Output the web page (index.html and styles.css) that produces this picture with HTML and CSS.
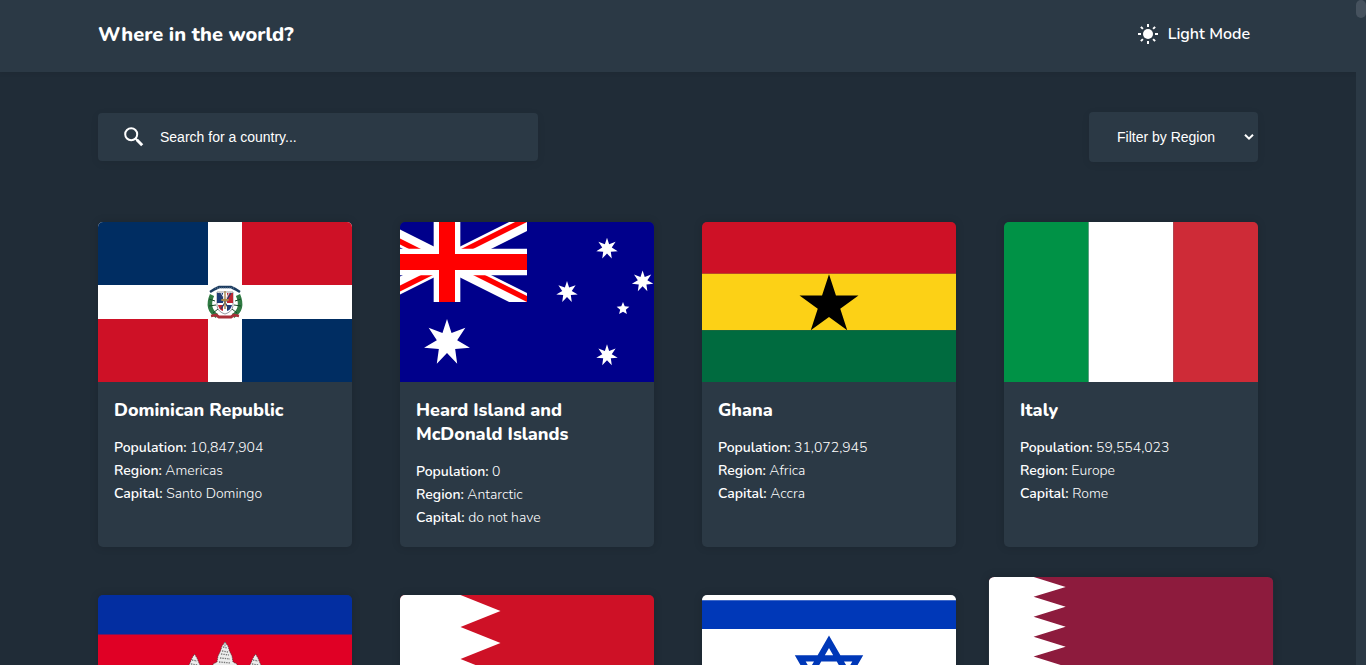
FILE: index.html
```
<!DOCTYPE html>
<html lang="en">
<head>
<meta charset="utf-8">
<title>Where in the world?</title>
<link rel="stylesheet" href="styles.css">
</head>
<body>
<div class="page">
  <header class="header">
    <h1 class="brand">Where in the world?</h1>
    <button class="theme" type="button">
      <svg class="theme-icon" width="20" height="20" viewBox="0 0 20 20" fill="#fff">
        <circle cx="10" cy="10" r="5"/>
        <path d="M9 0h2v3H9zM9 17h2v3H9zM0 9h3v2H0zM17 9h3v2h-3z"/>
        <path d="M2.900 2.900l2 2M17.100 2.900l-2 2M2.900 17.100l2-2M17.100 17.100l-2-2" stroke="#fff" stroke-width="2"/>
      </svg>
      <span class="theme-label">Light Mode</span>
    </button>
  </header>
  <main class="main">
    <div class="controls">
      <label class="search">
        <svg width="20" height="20" viewBox="0 0 20 20" fill="none" stroke="#fff">
          <circle cx="7.2" cy="7.2" r="6" stroke-width="2"/>
          <path d="M11.4 11.4l2 2" stroke-width="2"/>
          <path d="M12.8 12.8l5.4 5.4" stroke-width="3"/>
        </svg>
        <span>Search for a country...</span>
      </label>
      <div class="filter">
        <span>Filter by Region</span>
        <svg width="10" height="8" viewBox="0 0 10 8" fill="none" stroke="#fff" stroke-width="2"><path d="M1 1.7l4 4 4-4"/></svg>
      </div>
    </div>
    <section class="grid">
      <article class="card">
        <svg class="flag" viewBox="0 0 254 160">
          <path fill="#fff" d="M0 0h254v160H0z"/>
          <path fill="#002d62" d="M0 0h110v63H0zM144 97h110v63H144z"/>
          <path fill="#ce1126" d="M144 0h110v63H144zM0 97h110v63H0z"/>
          <g fill="none">
            <path d="M114 73q-6 14 5 21M140 73q6 14-5 21" stroke="#2f7a42" stroke-width="4.500"/>
            <path d="M111 77l6 2M111 84l7-1M115 91l5-4M143 77l-6 2M143 84l-7-1M139 91l-5-4" stroke="#174a26" stroke-width="1"/>
            <path d="M112 70l5-3 4-2h12l4 2 5 3" stroke="#1c3c60" stroke-width="2.600"/>
            <path d="M117 66h20" stroke="#8297ae" stroke-width=".8" stroke-dasharray="1 1"/>
            <path d="M113 94l5-1 3 2h12l3-2 5 1" stroke="#a92f38" stroke-width="2.800"/>
          </g>
          <path fill="#fff" stroke="#6d6d78" stroke-width=".7" d="M119 70h16v14q-1 6-8 8-7-2-8-8z"/>
          <path fill="#1c3c78" d="M119 71h6v10h-6zM129 83h5q-1 5-5 6z"/>
          <path fill="#c02632" d="M129 71h6v10h-6zM120 83h5v6q-4-1-5-6z"/>
          <path d="M121 71l10 16M133 71l-10 16" stroke="#2f3f68" stroke-width="1.400"/>
          <path d="M123 71l5 8M131 71l-4 8" stroke="#d8dbe4" stroke-width="1"/>
          <path fill="#a8854a" d="M126.300 69h1.400v8h3v2h-3v8h-1.400v-8h-3v-2h3z"/>
        </svg>
        <div class="info">
          <h2 class="name">Dominican Republic</h2>
          <p><b>Population:</b> 10,847,904</p>
          <p><b>Region:</b> Americas</p>
          <p><b>Capital:</b> Santo Domingo</p>
        </div>
      </article>
      <article class="card">
        <svg class="flag" viewBox="33 0 254 160">
          <defs>
            <clipPath id="canton"><path d="M0 0h60v30H0z"/></clipPath>
            <clipPath id="quarters"><path d="M30 15h30v15zv15H0zH0V0zV0h30z"/></clipPath>
            <polygon id="star7" points="0,-1 0.193,-0.4 0.782,-0.623 0.433,-0.099 0.975,0.223 0.347,0.277 0.434,0.901 0,0.444 -0.434,0.901 -0.347,0.277 -0.975,0.223 -0.433,-0.099 -0.782,-0.623 -0.193,-0.4"/>
          </defs>
          <path fill="#00008b" d="M0 0h320v160H0z"/>
          <g clip-path="url(#canton)" transform="scale(2.66667)">
            <path d="M0 0l60 30M60 0L0 30" stroke="#fff" stroke-width="6"/>
            <path d="M0 0l60 30M60 0L0 30" stroke="#f00" stroke-width="4" clip-path="url(#quarters)"/>
            <path d="M30 0v30M0 15h60" stroke="#fff" stroke-width="10"/>
            <path d="M30 0v30M0 15h60" stroke="#f00" stroke-width="6"/>
          </g>
          <g fill="#fff">
            <use href="#star7" transform="translate(80 120.500) scale(23.500)"/>
            <use href="#star7" transform="translate(240 133.3) scale(11)"/>
            <use href="#star7" transform="translate(200 70) scale(11)"/>
            <use href="#star7" transform="translate(240 26.7) scale(11)"/>
            <use href="#star7" transform="translate(275.6 59.400) scale(11)"/>
            <polygon transform="translate(256 86.7) scale(6.67)" points="0,-1 .26,-.36 .951,-.309 .42,.14 .588,.809 0,.445 -.588,.809 -.42,.14 -.951,-.309 -.26,-.36"/>
          </g>
        </svg>
        <div class="info">
          <h2 class="name">Heard Island and McDonald Islands</h2>
          <p><b>Population:</b> 0</p>
          <p><b>Region:</b> Antarctic</p>
          <p><b>Capital:</b> do not have</p>
        </div>
      </article>
      <article class="card">
        <svg class="flag" viewBox="0 0 254 160">
          <path fill="#ce1126" d="M0 0h254v51.8H0z"/>
          <path fill="#fcd116" d="M0 51.8h254v56.4H0z"/>
          <path fill="#006b3f" d="M0 108.2h254V160H0z"/>
          <polygon points="0,-1 .2245,-.309 .951,-.309 .363,.118 .588,.809 0,.382 -.588,.809 -.363,.118 -.951,-.309 -.2245,-.309" transform="translate(127 83.2) scale(31)"/>
        </svg>
        <div class="info">
          <h2 class="name">Ghana</h2>
          <p><b>Population:</b> 31,072,945</p>
          <p><b>Region:</b> Africa</p>
          <p><b>Capital:</b> Accra</p>
        </div>
      </article>
      <article class="card">
        <svg class="flag" viewBox="0 0 254 160">
          <path fill="#009246" d="M0 0h84.67v160H0z"/>
          <path fill="#fff" d="M84.67 0h84.67v160H84.67z"/>
          <path fill="#ce2b37" d="M169.33 0H254v160h-84.67z"/>
        </svg>
        <div class="info">
          <h2 class="name">Italy</h2>
          <p><b>Population:</b> 59,554,023</p>
          <p><b>Region:</b> Europe</p>
          <p><b>Capital:</b> Rome</p>
        </div>
      </article>
      <article class="card">
        <svg class="flag" viewBox="0 0 254 160">
          <path fill="#032ea1" d="M0 0h254v160H0z"/>
          <path fill="#e00025" d="M0 39.4h254v81.2H0z"/>
          <g fill="#ececec" stroke="#4a3034" stroke-width=".7" stroke-dasharray="1.5 .8">
            <path d="M127 47l3 4 1.5 5 2.5 5 1 6 4 2v20h-24V69l4-2 1-6 2.5-5 1.500-5z"/>
            <path d="M96.500 59l2.500 4 2 5 2 4v17H90V72l2-4 2-5zM157.500 59l2.500 4 2 5 2 4v17h-13V72l2-4 2-5z"/>
            <path d="M70 90h114v18H70z"/>
          </g>
          <path d="M127 47v5M125 52l4 1M124 56l6 1M123 59l8 1M122 63l10 1M121 67l12 1M94 65l5 1M93 69l7 1M155 65l5 1M154 69l7 1" stroke="#777" stroke-width="1.300" stroke-dasharray="1.400 1"/>
        </svg>
      </article>
      <article class="card">
        <svg class="flag" viewBox="0 0 254 160">
          <path fill="#ce1126" d="M0 0h254v160H0z"/>
          <path fill="#fff" d="M0 0h60.500l40 16-40 16 40 16-40 16 40 16-40 16 40 16-40 16 40 16-40 16H0z"/>
        </svg>
      </article>
      <article class="card">
        <svg class="flag" viewBox="0 0 254 160">
          <path fill="#fff" d="M0 0h254v160H0z"/>
          <path fill="#0038b8" d="M0 5.300h254V34H0zM0 126h254v28.700H0z"/>
          <path fill="none" stroke="#0038b8" stroke-width="6.300" d="M127 46.800l28.750 49.800h-57.500zM127 113.200l28.750-49.800h-57.500z"/>
        </svg>
      </article>
      <article class="card card-active">
        <svg class="flag" viewBox="0 0 254 160">
          <path fill="#8d1b3d" d="M0 0h254v160H0z"/>
          <path fill="#fff" d="M0 0h40l28.700 8.890L40 17.780l28.700 8.890L40 35.560l28.700 8.880L40 53.330l28.700 8.890L40 71.110 68.700 80 40 88.890l28.700 8.890L40 106.670l28.700 8.890L40 124.440l28.700 8.890L40 142.220l28.700 8.890L40 160H0z"/>
        </svg>
      </article>
    </section>
  </main>
</div>
<div class="scrollbar"><div class="thumb"></div></div>
</body>
</html>
```
FILE: styles.css
```
* { box-sizing: border-box; margin: 0; padding: 0; }
body {
  display: flex;
  height: 665px;
  overflow: hidden;
  background: #202c37;
  color: #fff;
  font-family: Nunito, Lato, "Open Sans", sans-serif;
}
.page { flex: 1; min-width: 0; height: 665px; overflow: hidden; }
.scrollbar { width: 10px; height: 665px; background: #2b3945; }
.thumb { height: 18px; border-radius: 5px; background: #46525e; }
.header {
  display: flex;
  justify-content: space-between;
  height: 72px;
  padding: 20px 98px 0;
  background: #2b3945;
  box-shadow: 0 2px 4px rgba(0, 0, 0, .06);
}
.brand { padding-top: 1px; font-size: 20px; line-height: 28px; font-weight: 800; white-space: nowrap; }
.theme {
  display: flex;
  align-items: center;
  gap: 10px;
  height: 28px;
  margin-right: 8px;
  border: 0;
  background: none;
  color: #fff;
  font: 600 16px/28px Nunito, Lato, sans-serif;
}
.main { padding: 40px 98px 0; }
.controls {
  display: flex;
  align-items: center;
  justify-content: space-between;
  height: 50px;
  font: 14px/20px "Liberation Sans", Arial, sans-serif;
}
.search, .filter {
  display: flex;
  align-items: center;
  background: #2b3945;
  border-radius: 4px;
  box-shadow: 0 2px 8px rgba(0, 0, 0, .07);
}
.search { width: 440px; height: 48px; padding-left: 26px; gap: 16px; }
.filter { width: 169px; height: 50px; padding: 0 4px 0 28px; justify-content: space-between; }
.grid {
  display: grid;
  grid-template-columns: repeat(4, 254px);
  grid-template-rows: 325px 301px;
  gap: 48px;
  margin-top: 60px;
}
.card {
  background: #2b3945;
  border-radius: 5px;
  overflow: hidden;
  box-shadow: 0 0 8px rgba(0, 0, 0, .15);
}
.card-active { transform: scale(1.12); }
.flag { display: block; width: 254px; height: 160px; }
.info { padding: 16px 16px 18px; font-size: 14px; font-weight: 300; line-height: 23px; }
.name { margin-bottom: 14px; font-size: 18px; line-height: 24px; font-weight: 800; }
.info b { font-weight: 600; }
```
